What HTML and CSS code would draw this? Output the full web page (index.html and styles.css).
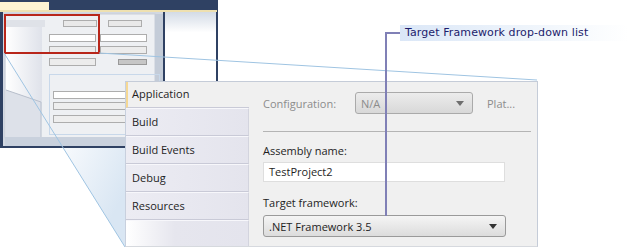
FILE: index.html
```html
<!DOCTYPE html>
<html lang="en">
<head>
    <meta charset="UTF-8">
    <title>Target Framework drop-down list</title>
    <link rel="stylesheet" href="styles.css">
</head>
<body>
<div class="canvas">
    <!-- thumbnail of the whole window + the zoom cone -->
    <svg class="backdrop" width="643" height="247" viewBox="0 0 643 247">
        <defs>
            <linearGradient id="coneFill" gradientUnits="userSpaceOnUse" x1="40" y1="150" x2="125" y2="190">
                <stop offset="0" stop-color="#ffffff"/>
                <stop offset="1" stop-color="#d9e6f3"/>
            </linearGradient>
            <linearGradient id="miniNav" x1="0" y1="0" x2="1" y2="0">
                <stop offset="0" stop-color="#ffffff"/>
                <stop offset="1" stop-color="#dfe2ea"/>
            </linearGradient>
            <linearGradient id="rightPane" x1="0" y1="0" x2="0" y2="1">
                <stop offset="0" stop-color="#d3dbe6"/>
                <stop offset="0.15" stop-color="#ffffff"/>
                <stop offset="1" stop-color="#ffffff"/>
            </linearGradient>
        </defs>
        <polygon points="4,53 125,53 125,247" fill="url(#coneFill)"/>

        <rect x="0" y="0" width="218" height="148" fill="#2f4163"/>
        <rect x="0" y="2" width="49" height="8" fill="#fdf3d3"/>
        <rect x="0" y="10" width="217" height="2" fill="#eee0b0"/>
        <rect x="3" y="12" width="160" height="134" fill="#d2d8e2"/>
        <rect x="165" y="12" width="51" height="136" fill="url(#rightPane)"/>

        <!-- mini dialog -->
        <rect x="5" y="14" width="150" height="124" fill="#eef0f3" stroke="#c9ced8"/>
        <rect x="6" y="20" width="39" height="7" fill="#dfe2e8"/>
        <polygon points="6,27 42,27 42,137 41,102 6,90" fill="url(#miniNav)"/>
        <polygon points="6,90 41,102 41,137 6,137" fill="#dde1e9"/>
        <line x1="6" y1="90" x2="41" y2="102" stroke="#b8bfcc"/>
        <line x1="41" y1="102" x2="41" y2="137" stroke="#b8bfcc"/>
        <rect x="5" y="137" width="158" height="9" fill="#c9d1dd"/>
        <rect x="155" y="14" width="8" height="124" fill="#c4ccd8"/>

        <g stroke="#adadad" stroke-width="1">
            <rect x="63.5" y="20.5" width="33" height="6" fill="#e9e9e9"/>
            <rect x="108.5" y="20.5" width="33" height="6" fill="#e9e9e9"/>
            <rect x="49.5" y="34.5" width="46" height="7" fill="#ffffff"/>
            <rect x="100.5" y="34.5" width="46" height="7" fill="#ffffff"/>
            <rect x="49.5" y="46.5" width="46" height="7" fill="#ececec"/>
            <rect x="100.5" y="46.5" width="46" height="7" fill="#ececec"/>
            <rect x="49.5" y="58.5" width="46" height="7" fill="#ececec"/>
            <rect x="118.5" y="59.5" width="28" height="5" fill="#c6c6c6" stroke="#999999"/>
        </g>
        <rect x="49.5" y="74.5" width="110" height="60" fill="none" stroke="#c8d8ea"/>
        <g stroke="#adadad" stroke-width="1">
            <rect x="53.5" y="91.5" width="80" height="7" fill="#ffffff"/>
            <rect x="53.5" y="102.5" width="80" height="7" fill="#eeeeee"/>
            <rect x="53.5" y="115.5" width="80" height="7" fill="#eeeeee"/>
        </g>

        <rect x="5" y="15" width="94" height="38" fill="none" stroke="#b8261a" stroke-width="2"/>

        <line x1="4" y1="53" x2="125" y2="247" stroke="#9fc4e2" stroke-width="1"/>
        <line x1="99" y1="53" x2="537" y2="80" stroke="#9fc4e2" stroke-width="1"/>
    </svg>

    <div class="panel">
        <ul class="nav">
            <li class="nav-item active">Application</li>
            <li class="nav-item">Build</li>
            <li class="nav-item">Build Events</li>
            <li class="nav-item">Debug</li>
            <li class="nav-item">Resources</li>
            <li class="nav-item empty"></li>
        </ul>
        <div class="content">
            <div class="config-row">
                <span class="config-label">Configuration:</span>
                <div class="combo combo-disabled"><span>N/A</span><span class="arrow"></span></div>
                <span class="plat">Plat...</span>
            </div>
            <div class="sep"></div>
            <div class="field-label">Assembly name:</div>
            <div class="textbox">TestProject2</div>
            <div class="field-label">Target framework:</div>
            <div class="combo combo-target"><span>.NET Framework 3.5</span><span class="arrow"></span></div>
        </div>
    </div>

    <div class="callout">
        <span class="callout-tick"></span>
        <span class="callout-label">Target Framework drop-down list</span>
    </div>
</div>
</body>
</html>
```

FILE: styles.css
```css
body {
    margin: 0;
    background: #ffffff;
}
.canvas {
    position: relative;
    width: 643px;
    height: 247px;
    overflow: hidden;
    background: #ffffff;
    font-family: "Open Sans", "Noto Sans", sans-serif;
    font-size: 11px;
    color: #1e1e1e;
}
.backdrop {
    position: absolute;
    left: 0;
    top: 0;
}

/* enlarged project designer */
.panel {
    position: absolute;
    left: 125px;
    top: 81px;
    width: 413px;
    height: 166px;
    box-sizing: border-box;
    display: flex;
    border-top: 1px solid #c5ccd8;
    border-left: 1px solid #c8d0de;
    border-right: 1px solid #c5ccd8;
    border-bottom: 1px solid #d6d9de;
    background: #f0f0f0;
}
.nav {
    list-style: none;
    margin: 0;
    padding: 0;
    width: 123px;
    flex: none;
    display: flex;
    flex-direction: column;
}
.nav-item {
    height: 28px;
    box-sizing: border-box;
    padding-left: 6px;
    line-height: 26px;
    background: linear-gradient(to right, #ececf3, #e4e4ed);
    border-top: 1px solid #f7f7fb;
    border-bottom: 1px solid #c9cad7;
    border-right: 1px solid #d3d4de;
}
.nav-item.active {
    height: 26px;
    line-height: 24px;
    padding-left: 4px;
    background: #f0f0f0;
    border-top: none;
    border-right: none;
    border-left: 2px solid #f5d894;
}
.nav-item.empty {
    flex: 1;
    border-bottom: none;
    background: linear-gradient(to right, #ffffff, #e6e6ee 40%, #e4e4ed);
}
.content {
    flex: 1;
    padding: 10px 0 0 14px;
    display: flex;
    flex-direction: column;
    align-items: flex-start;
}
.config-row {
    display: flex;
    align-items: center;
    height: 22px;
    color: #8c8c8c;
}
.config-label {
    width: 92px;
}
.plat {
    margin-left: 14px;
}
.combo {
    box-sizing: border-box;
    height: 22px;
    border-radius: 3px;
    display: flex;
    align-items: center;
    justify-content: space-between;
    padding: 0 8px 0 5px;
}
.combo-disabled {
    width: 118px;
    color: #8c8c8c;
    border: 1px solid #aaaaaa;
    background: linear-gradient(#ececec, #d8d8d8);
}
.combo-target {
    width: 243px;
    margin-top: 5px;
    border: 1px solid #9a9a9a;
    background: linear-gradient(#f5f5f5, #dcdcdc);
}
.arrow {
    width: 0;
    height: 0;
    border-left: 4px solid transparent;
    border-right: 4px solid transparent;
    border-top: 5px solid #333333;
}
.combo-disabled .arrow {
    border-top-color: #6e6e6e;
}
.sep {
    width: 268px;
    height: 1px;
    margin-top: 17px;
    background: #b4b4b4;
}
.field-label {
    margin-top: 12px;
    line-height: 14px;
}
.field-label + .textbox + .field-label {
    margin-top: 14px;
}
.textbox {
    box-sizing: border-box;
    width: 242px;
    height: 20px;
    margin-top: 4px;
    padding-left: 5px;
    line-height: 18px;
    background: #ffffff;
    border: 1px solid #dedede;
}

/* callout */
.callout {
    position: absolute;
    left: 385px;
    top: 25px;
    height: 16px;
    display: flex;
    align-items: center;
}
.callout::before {
    content: "";
    position: absolute;
    left: 0;
    top: 7px;
    width: 2px;
    height: 184px;
    background: #8080b6;
}
.callout-tick {
    width: 15px;
    height: 2px;
    background: #8080b6;
}
.callout-label {
    height: 16px;
    line-height: 16px;
    padding: 0 40px 0 5px;
    font-family: "DejaVu Sans", Verdana, sans-serif;
    font-size: 11px;
    letter-spacing: 0.1px;
    color: #1c1c6c;
    background: linear-gradient(to right, #dbe7f7, #eef4fb 55%, #ffffff);
}
```
